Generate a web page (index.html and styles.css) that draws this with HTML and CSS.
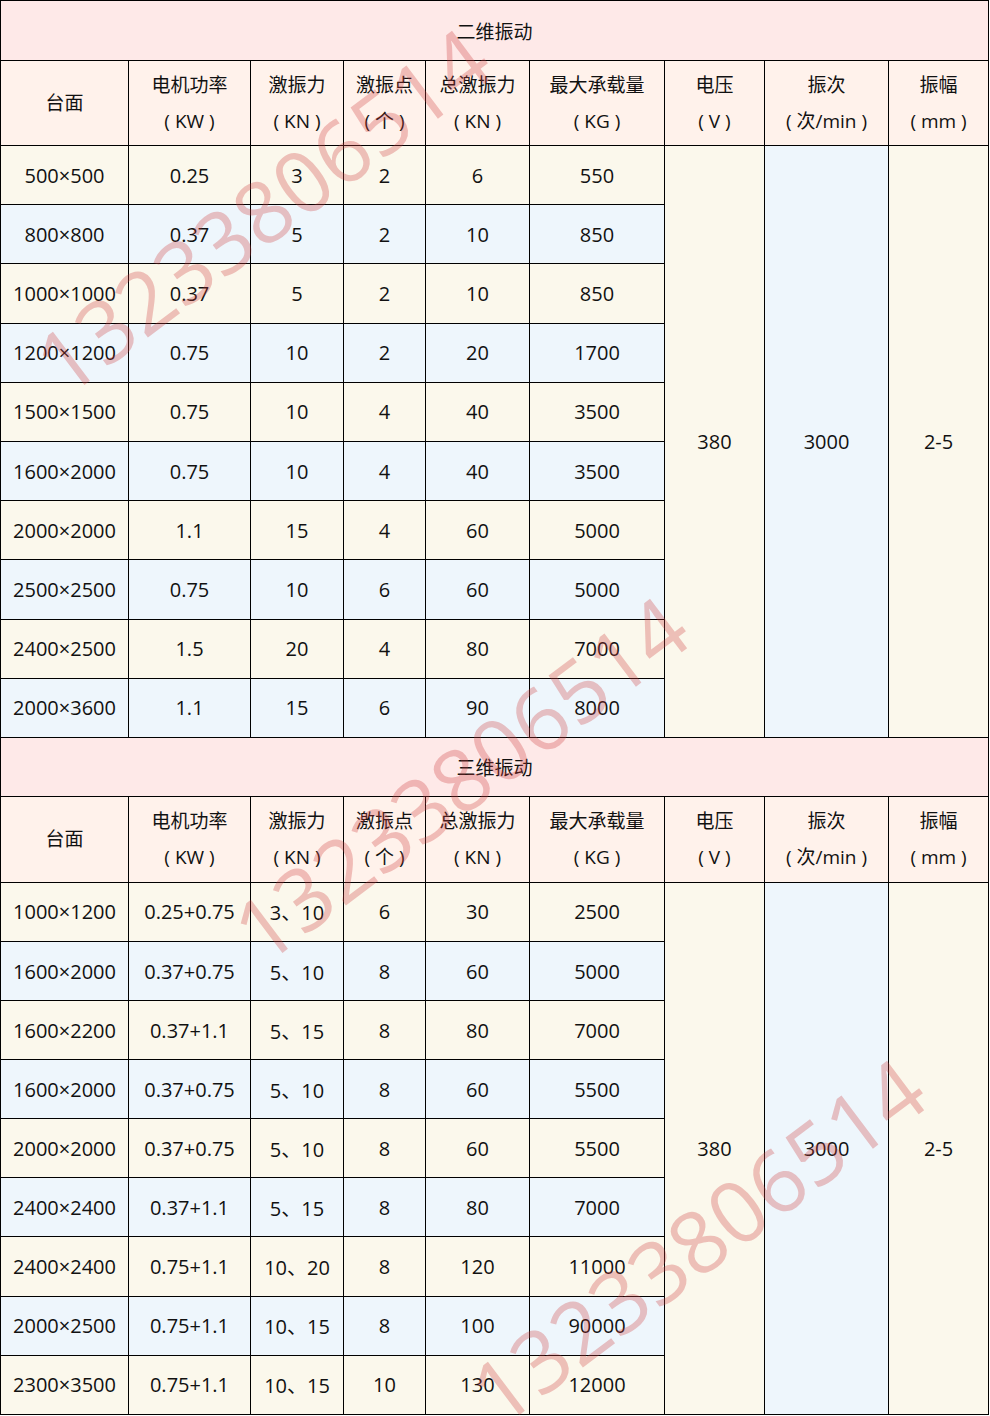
FILE: index.html
```html
<!DOCTYPE html>
<html lang="zh-CN">
<head>
<meta charset="utf-8">
<title>振动台参数</title>
<link rel="stylesheet" href="styles.css">
</head>
<body>
<div class="page">
<table class="spec">
  <colgroup>
    <col class="c1"><col class="c2"><col class="c3"><col class="c4"><col class="c5"><col class="c6"><col class="c7"><col class="c8"><col class="c9">
  </colgroup>
  <tbody>
    <tr class="title"><td colspan="9">二维振动</td></tr>
    <tr class="head">
      <td>台面</td>
      <td>电机功率<br>(&nbsp;KW&nbsp;)</td>
      <td>激振力<br>(&nbsp;KN&nbsp;)</td>
      <td>激振点<br>(&nbsp;个&nbsp;)</td>
      <td>总激振力<br>(&nbsp;KN&nbsp;)</td>
      <td>最大承载量<br>(&nbsp;KG&nbsp;)</td>
      <td>电压<br>(&nbsp;V&nbsp;)</td>
      <td>振次<br>(&nbsp;次/min&nbsp;)</td>
      <td>振幅<br>(&nbsp;mm&nbsp;)</td>
    </tr>
    <tr class="row cream">
      <td>500×500</td><td>0.25</td><td>3</td><td>2</td><td>6</td><td>550</td>
      <td rowspan="10" class="m-cream">380</td>
      <td rowspan="10" class="m-blue">3000</td>
      <td rowspan="10" class="m-cream">2-5</td>
    </tr>
    <tr class="row blue"><td>800×800</td><td>0.37</td><td>5</td><td>2</td><td>10</td><td>850</td></tr>
    <tr class="row cream"><td>1000×1000</td><td>0.37</td><td>5</td><td>2</td><td>10</td><td>850</td></tr>
    <tr class="row blue"><td>1200×1200</td><td>0.75</td><td>10</td><td>2</td><td>20</td><td>1700</td></tr>
    <tr class="row cream"><td>1500×1500</td><td>0.75</td><td>10</td><td>4</td><td>40</td><td>3500</td></tr>
    <tr class="row blue"><td>1600×2000</td><td>0.75</td><td>10</td><td>4</td><td>40</td><td>3500</td></tr>
    <tr class="row cream"><td>2000×2000</td><td>1.1</td><td>15</td><td>4</td><td>60</td><td>5000</td></tr>
    <tr class="row blue"><td>2500×2500</td><td>0.75</td><td>10</td><td>6</td><td>60</td><td>5000</td></tr>
    <tr class="row cream"><td>2400×2500</td><td>1.5</td><td>20</td><td>4</td><td>80</td><td>7000</td></tr>
    <tr class="row blue"><td>2000×3600</td><td>1.1</td><td>15</td><td>6</td><td>90</td><td>8000</td></tr>

    <tr class="title t2"><td colspan="9">三维振动</td></tr>
    <tr class="head h2">
      <td>台面</td>
      <td>电机功率<br>(&nbsp;KW&nbsp;)</td>
      <td>激振力<br>(&nbsp;KN&nbsp;)</td>
      <td>激振点<br>(&nbsp;个&nbsp;)</td>
      <td>总激振力<br>(&nbsp;KN&nbsp;)</td>
      <td>最大承载量<br>(&nbsp;KG&nbsp;)</td>
      <td>电压<br>(&nbsp;V&nbsp;)</td>
      <td>振次<br>(&nbsp;次/min&nbsp;)</td>
      <td>振幅<br>(&nbsp;mm&nbsp;)</td>
    </tr>
    <tr class="row r2 cream">
      <td>1000×1200</td><td>0.25+0.75</td><td>3、10</td><td>6</td><td>30</td><td>2500</td>
      <td rowspan="9" class="m-cream">380</td>
      <td rowspan="9" class="m-blue">3000</td>
      <td rowspan="9" class="m-cream">2-5</td>
    </tr>
    <tr class="row r2 blue"><td>1600×2000</td><td>0.37+0.75</td><td>5、10</td><td>8</td><td>60</td><td>5000</td></tr>
    <tr class="row r2 cream"><td>1600×2200</td><td>0.37+1.1</td><td>5、15</td><td>8</td><td>80</td><td>7000</td></tr>
    <tr class="row r2 blue"><td>1600×2000</td><td>0.37+0.75</td><td>5、10</td><td>8</td><td>60</td><td>5500</td></tr>
    <tr class="row r2 cream"><td>2000×2000</td><td>0.37+0.75</td><td>5、10</td><td>8</td><td>60</td><td>5500</td></tr>
    <tr class="row r2 blue"><td>2400×2400</td><td>0.37+1.1</td><td>5、15</td><td>8</td><td>80</td><td>7000</td></tr>
    <tr class="row r2 cream"><td>2400×2400</td><td>0.75+1.1</td><td>10、20</td><td>8</td><td>120</td><td>11000</td></tr>
    <tr class="row r2 blue"><td>2000×2500</td><td>0.75+1.1</td><td>10、15</td><td>8</td><td>100</td><td>90000</td></tr>
    <tr class="row r2 cream"><td>2300×3500</td><td>0.75+1.1</td><td>10、15</td><td>10</td><td>130</td><td>12000</td></tr>
  </tbody>
</table>
<div class="wm wm1">13233806514</div>
<div class="wm wm2">13233806514</div>
<div class="wm wm3">13233806514</div>
</div>
</body>
</html>
```
FILE: styles.css
```css
html, body {
  margin: 0;
  padding: 0;
  background: #ffffff;
}
.page {
  position: relative;
  width: 990px;
  height: 1416px;
  overflow: hidden;
}
.spec {
  border-collapse: collapse;
  table-layout: fixed;
  width: 989px;
  font-family: "Open Sans", "Noto Sans CJK SC", sans-serif;
  font-size: 20px;
  color: #111;
}
.spec td {
  border: 1px solid #000;
  padding: 0;
  text-align: center;
  vertical-align: middle;
}
.c1 { width: 128px; }
.c2 { width: 122px; }
.c3 { width: 93px; }
.c4 { width: 82px; }
.c5 { width: 104px; }
.c6 { width: 135px; }
.c7 { width: 100px; }
.c8 { width: 124px; }
.c9 { width: 100px; }

.title td {
  background: #fee9e8;
  height: 59px;
  font-family: "Noto Sans CJK SC", sans-serif;
  font-size: 19px;
}
.t2 td { height: 58px; }
.head td {
  background: #fff2eb;
  height: 84px;
  line-height: 36px;
  font-family: "Open Sans", "Noto Sans CJK SC", sans-serif;
  font-size: 19px;
}
.h2 td { height: 85px; }
.row td { height: 58.2px; }
.row.r2 td { height: 58.1px; }
.cream td { background: #fbf8ec; }
.blue td { background: #eef6fc; }
.row td.m-cream { background: #fbf8ec; }
.row td.m-blue { background: #eef6fc; }

.wm {
  position: absolute;
  font-family: "Open Sans", "DejaVu Sans", sans-serif;
  font-weight: 400;
  font-size: 86px;
  line-height: 1;
  color: rgba(205, 60, 60, 0.3);
  white-space: nowrap;
  transform: translate(-50%, -50%) rotate(-37deg);
  pointer-events: none;
}
.wm1 { left: 262px; top: 210px; }
.wm2 { left: 460px; top: 778px; }
.wm3 { left: 697px; top: 1240px; }
```
